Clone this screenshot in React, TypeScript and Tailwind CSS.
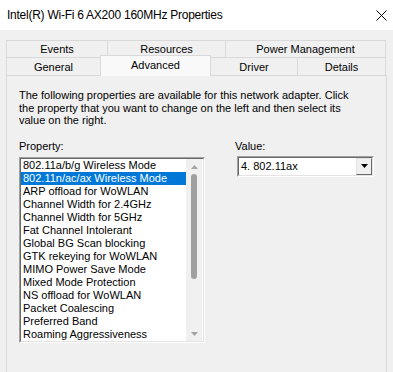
const properties = [
  "802.11a/b/g Wireless Mode",
  "802.11n/ac/ax Wireless Mode",
  "ARP offload for WoWLAN",
  "Channel Width for 2.4GHz",
  "Channel Width for 5GHz",
  "Fat Channel Intolerant",
  "Global BG Scan blocking",
  "GTK rekeying for WoWLAN",
  "MIMO Power Save Mode",
  "Mixed Mode Protection",
  "NS offload for WoWLAN",
  "Packet Coalescing",
  "Preferred Band",
  "Roaming Aggressiveness",
];

const selectedIndex = 1;

function CloseIcon() {
  return (
    <svg width="11" height="11" viewBox="0 0 11 11" aria-hidden>
      <path d="M0.5 0.5 L10.5 10.5 M10.5 0.5 L0.5 10.5" stroke="#000" strokeWidth="1" />
    </svg>
  );
}

function Arrow({ up, color }: { up?: boolean; color: string }) {
  return (
    <svg width="7" height="4" viewBox="0 0 7 4" aria-hidden>
      <path d={up ? "M0 4 L3.5 0 L7 4 Z" : "M0 0 L7 0 L3.5 4 Z"} fill={color} />
    </svg>
  );
}

function PropertyList() {
  return (
    <div className="w-[186px] h-[186px] border-t border-l border-[#a0a0a0] border-b-white border-r-white border-b border-r">
      <div className="flex h-full border-t border-l border-[#696969] border-b border-r border-b-[#e3e3e3] border-r-[#e3e3e3] bg-white">
        <ul className="w-[165px]">
          {properties.map((p, i) => (
            <li
              key={p}
              className={`h-[13px] leading-[13px] pl-[2px] whitespace-nowrap ${
                i === selectedIndex ? "bg-[#0078d7] text-white" : "text-black"
              }`}
            >
              {p}
            </li>
          ))}
        </ul>
        <div className="w-[16px] bg-[#f0f0f0] flex flex-col items-center pt-[6px] pb-[5px]">
          <Arrow up color="#a3a3a3" />
          <div className="mt-[5px] w-[6px] h-[105px] rounded-full bg-[#a0a0a0]" />
          <div className="flex-1" />
          <Arrow color="#a3a3a3" />
        </div>
      </div>
    </div>
  );
}

function ValueCombo() {
  return (
    <div className="ml-[2px] w-[137px] h-[21px] border-t border-l border-[#a0a0a0] border-b border-r border-b-white border-r-white">
      <div className="flex items-center h-full border-t border-l border-[#696969] border-b border-r border-b-[#e3e3e3] border-r-[#e3e3e3] bg-white pl-[2px]">
        <span className="flex-1 whitespace-nowrap">4. 802.11ax</span>
        <div className="w-[16px] h-[17px] flex items-center justify-center bg-[#f0f0f0] border-t border-l border-[#e3e3e3] border-b border-r border-b-[#696969] border-r-[#696969]">
          <Arrow color="#000" />
        </div>
      </div>
    </div>
  );
}

export default function App() {
  const tab = "border-l border-t border-[#d9d9d9] flex items-center justify-center";
  return (
    <div className="w-[393px] h-[372px] overflow-hidden bg-[#f0f0f0] font-['Liberation_Sans',Arial,sans-serif] text-[11px] text-black">
      <div className="h-[30px] bg-white flex items-center justify-between pl-[7px] pr-[6px]">
        <span className="text-[12px] leading-[14px] tracking-[-0.25px]">
          Intel(R) Wi-Fi 6 AX200 160MHz Properties
        </span>
        <CloseIcon />
      </div>

      <div className="pt-[10px] pl-[6px] w-[387px]">
        <div className="flex h-[17px]">
          <div className={`${tab} w-[101px]`}>Events</div>
          <div className={`${tab} w-[118px]`}>Resources</div>
          <div className={`${tab} w-[161px] border-r`}>Power Management</div>
        </div>

        <div className="flex items-end h-[20px] -mt-[2px]">
          <div className={`${tab} w-[94px] h-[18px] pt-[2px]`}>General</div>
          <div className={`${tab} self-start relative z-10 w-[111px] h-[21px] border-r bg-[#f9f9f9] pb-[2px]`}>
            Advanced
          </div>
          <div className="border-t border-[#d9d9d9] flex items-center justify-center w-[86px] h-[18px] pt-[2px]">
            Driver
          </div>
          <div className={`${tab} w-[89px] h-[18px] border-r pt-[2px]`}>Details</div>
        </div>

        <div className="h-[320px] border border-[#d9d9d9] pl-[12px] pt-[13px]">
          <p className="leading-[12.5px] whitespace-nowrap">
            The following properties are available for this network adapter. Click
            <br />
            the property that you want to change on the left and then select its
            <br />
            value on the right.
          </p>

          <div className="flex mt-[13px]">
            <div className="flex flex-col">
              <span className="leading-[13px] mb-[4px]">Property:</span>
              <PropertyList />
            </div>
            <div className="flex flex-col ml-[30px]">
              <span className="leading-[13px] mb-[3px]">Value:</span>
              <ValueCombo />
            </div>
          </div>
        </div>
      </div>
    </div>
  );
}
